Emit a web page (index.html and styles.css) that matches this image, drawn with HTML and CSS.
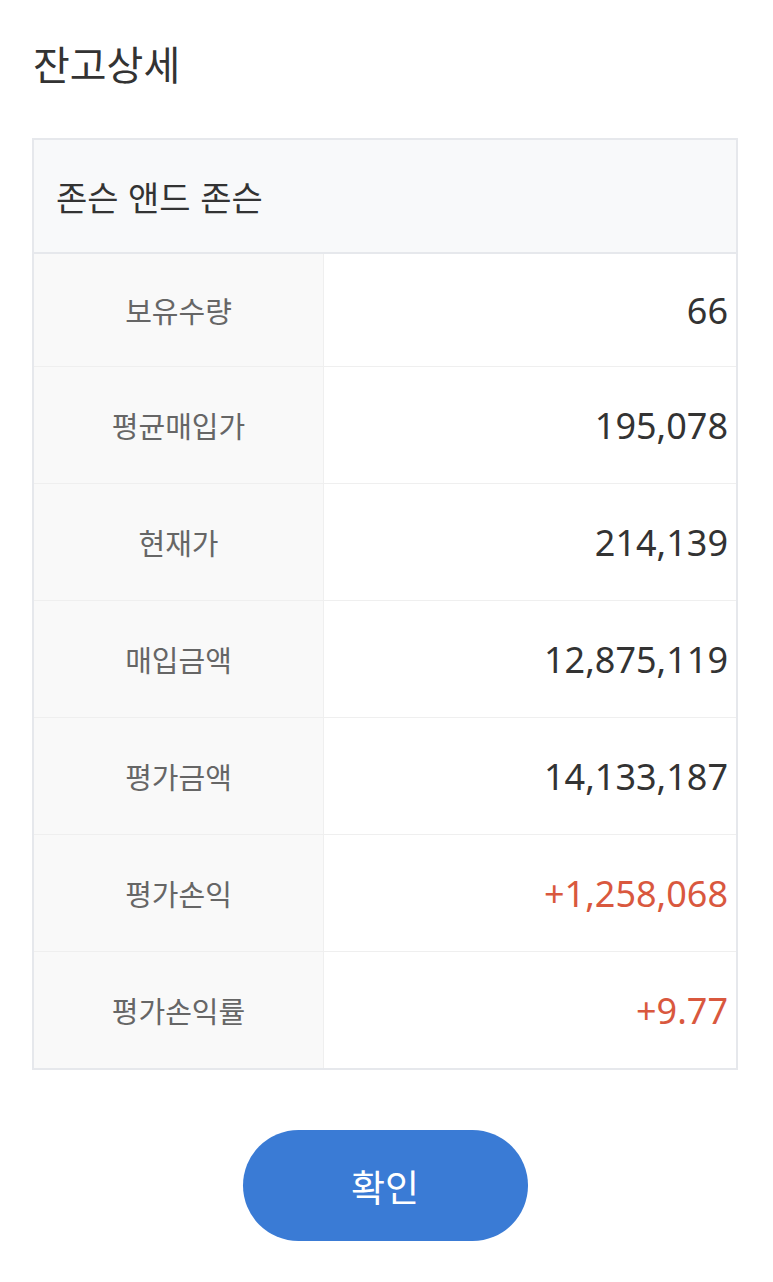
FILE: index.html
```html
<!DOCTYPE html>
<html lang="ko">
<head>
  <meta charset="utf-8">
  <title>잔고상세</title>
  <link rel="stylesheet" href="styles.css">
</head>
<body>
  <div id="container">
    <h2 class="title">잔고상세</h2>
    <table class="detail">
      <thead>
        <tr>
          <th colspan="2" class="stock">존슨 앤드 존슨</th>
        </tr>
      </thead>
      <tbody>
        <tr><td class="label">보유수량</td><td class="value">66</td></tr>
        <tr><td class="label">평균매입가</td><td class="value">195,078</td></tr>
        <tr><td class="label">현재가</td><td class="value">214,139</td></tr>
        <tr><td class="label">매입금액</td><td class="value">12,875,119</td></tr>
        <tr><td class="label">평가금액</td><td class="value">14,133,187</td></tr>
        <tr><td class="label">평가손익</td><td class="value up">+1,258,068</td></tr>
        <tr><td class="label">평가손익률</td><td class="value up">+9.77</td></tr>
      </tbody>
    </table>
    <div class="actions">
      <button class="ok">확인</button>
    </div>
  </div>
</body>
</html>
```
FILE: styles.css
```css
body {
  margin: 0;
  background-color: #fff;
  font-family: "Noto Sans CJK KR", "Noto Sans", sans-serif;
  color: #333;
}
#container {
  padding: 39px 35px 0 32px;
}
.title {
  margin: 0 0 0 1px;
  font-size: 40px;
  font-weight: 400;
  line-height: 48px;
  color: #333;
}
.detail {
  width: 100%;
  margin-top: 51px;
  border-collapse: collapse;
  border: 2px solid #e6e8ec;
}
.stock {
  height: 112px;
  padding: 0 0 0 22px;
  text-align: left;
  font-size: 34px;
  font-weight: 400;
  color: #333;
  background-color: #f8f9fa;
  border-bottom: 2px solid #e6e8ec;
}
td {
  height: 116px;
  padding: 0;
  border-top: 1px solid #efefef;
}
tbody tr:first-child td {
  height: 112px;
}
.label {
  width: 289px;
  text-align: center;
  font-size: 29px;
  color: #666;
  background-color: #f9f9f9;
  border-right: 1px solid #efefef;
}
.value {
  text-align: right;
  padding-right: 8px;
  font-family: "Noto Sans", "Noto Sans CJK KR", sans-serif;
  font-size: 36px;
  color: #333;
}
.value.up {
  color: #d9583e;
}
.actions {
  display: flex;
  justify-content: center;
  margin-top: 60px;
}
.ok {
  width: 285px;
  height: 111px;
  border: none;
  border-radius: 56px;
  background-color: #3a7bd5;
  color: #fff;
  font-family: "Noto Sans CJK KR", sans-serif;
  font-size: 37px;
}
```
